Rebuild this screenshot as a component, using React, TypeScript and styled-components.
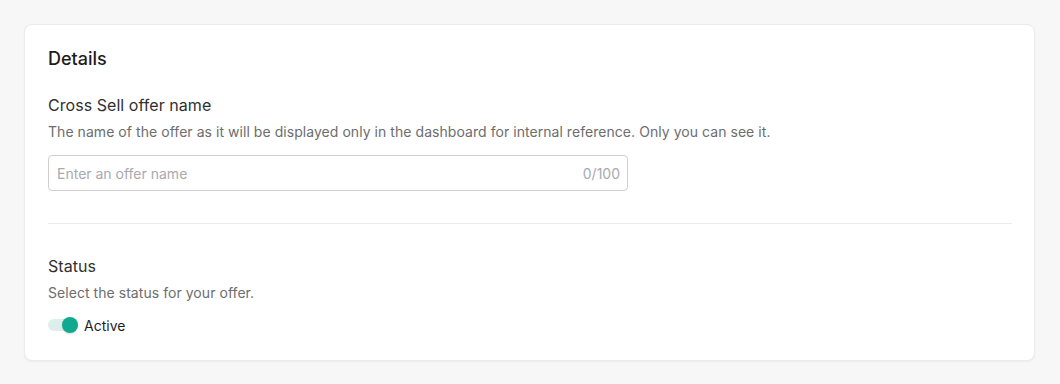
import React from 'react';
import styled, { createGlobalStyle } from 'styled-components';

const GlobalStyle = createGlobalStyle`
  html, body {
    margin: 0;
    padding: 0;
    background: #f7f7f7;
  }
  body {
    font-family: Inter, "Noto Sans", "Liberation Sans", sans-serif;
    -webkit-font-smoothing: antialiased;
  }
`
const Page = styled.div`
  padding: 24px 25px 24px 24px;
`
const Card = styled.section`
  background: #ffffff;
  border: 1px solid #ececec;
  border-radius: 8px;
  box-shadow: 0 1px 2px rgba(0, 0, 0, 0.05);
  padding: 24px 22px 25px 23px;
`
const Title = styled.h2`
  margin: 0;
  font-size: 18px;
  line-height: 20px;
  font-weight: 500;
  color: #1c1c1c;
`
const Field = styled.div`
  display: flex;
  flex-direction: column;
  margin-top: ${(p: { $top: number }) => p.$top}px;
`
const Label = styled.div`
  font-size: 16px;
  line-height: 24px;
  font-weight: 400;
  color: #303030;
  letter-spacing: 0.05px;
`
const Help = styled.div`
  margin-top: 5px;
  font-size: 14px;
  line-height: 20px;
  color: #6d6d6d;
  letter-spacing: 0.05px;
`
const InputWrap = styled.div`
  margin-top: 13px;
  width: 580px;
  height: 36px;
  box-sizing: border-box;
  border: 1px solid #cfcfd4;
  border-radius: 4px;
  display: flex;
  align-items: center;
  padding: 0 7px 0 8px;
`
const Input = styled.input`
  flex: 1;
  border: 0;
  outline: none;
  background: transparent;
  font-family: inherit;
  font-size: 14px;
  color: #222;
  padding: 0;
  &::placeholder {
    color: #a9a9b0;
  }
`
const Counter = styled.span`
  font-size: 14px;
  color: #a9a9b0;
`
const Divider = styled.hr`
  margin: 32px 0 0;
  border: 0;
  border-top: 1px solid #ececec;
`
const ToggleRow = styled.label`
  margin-top: 12px;
  display: flex;
  align-items: center;
  gap: 6px;
  height: 20px;
  font-size: 14px;
  color: #1f1f1f;
`
const Track = styled.span`
  position: relative;
  width: 30px;
  height: 12px;
  border-radius: 6px;
  background: ${(p: { $on: boolean }) => (p.$on ? '#dcefed' : '#e4e4e4')};
`
const Thumb = styled.span`
  position: absolute;
  top: -2px;
  right: ${(p: { $on: boolean }) => (p.$on ? '0' : '14px')};
  width: 16px;
  height: 16px;
  border-radius: 50%;
  background: ${(p: { $on: boolean }) => (p.$on ? '#0ea98e' : '#ffffff')};
  box-shadow: 0 1px 2px rgba(0, 0, 0, 0.15);
`

export default function App() {
  const [name, setName] = React.useState('');
  const [active, setActive] = React.useState(true);

  return (
    <Page>
      <GlobalStyle />
      <Card>
        <Title>Details</Title>
        <Field $top={24}>
          <Label>Cross Sell offer name</Label>
          <Help>
            The name of the offer as it will be displayed only in the dashboard for internal reference. Only you can see it.
          </Help>
          <InputWrap>
            <Input
              placeholder="Enter an offer name"
              maxLength={100}
              value={name}
              onChange={(e) => setName(e.target.value)}
            />
            <Counter>{name.length}/100</Counter>
          </InputWrap>
        </Field>
        <Divider />
        <Field $top={30}>
          <Label>Status</Label>
          <Help>Select the status for your offer.</Help>
          <ToggleRow onClick={() => setActive(!active)}>
            <Track $on={active}>
              <Thumb $on={active} />
            </Track>
            {active ? 'Active' : 'Inactive'}
          </ToggleRow>
        </Field>
      </Card>
    </Page>
  );
}
